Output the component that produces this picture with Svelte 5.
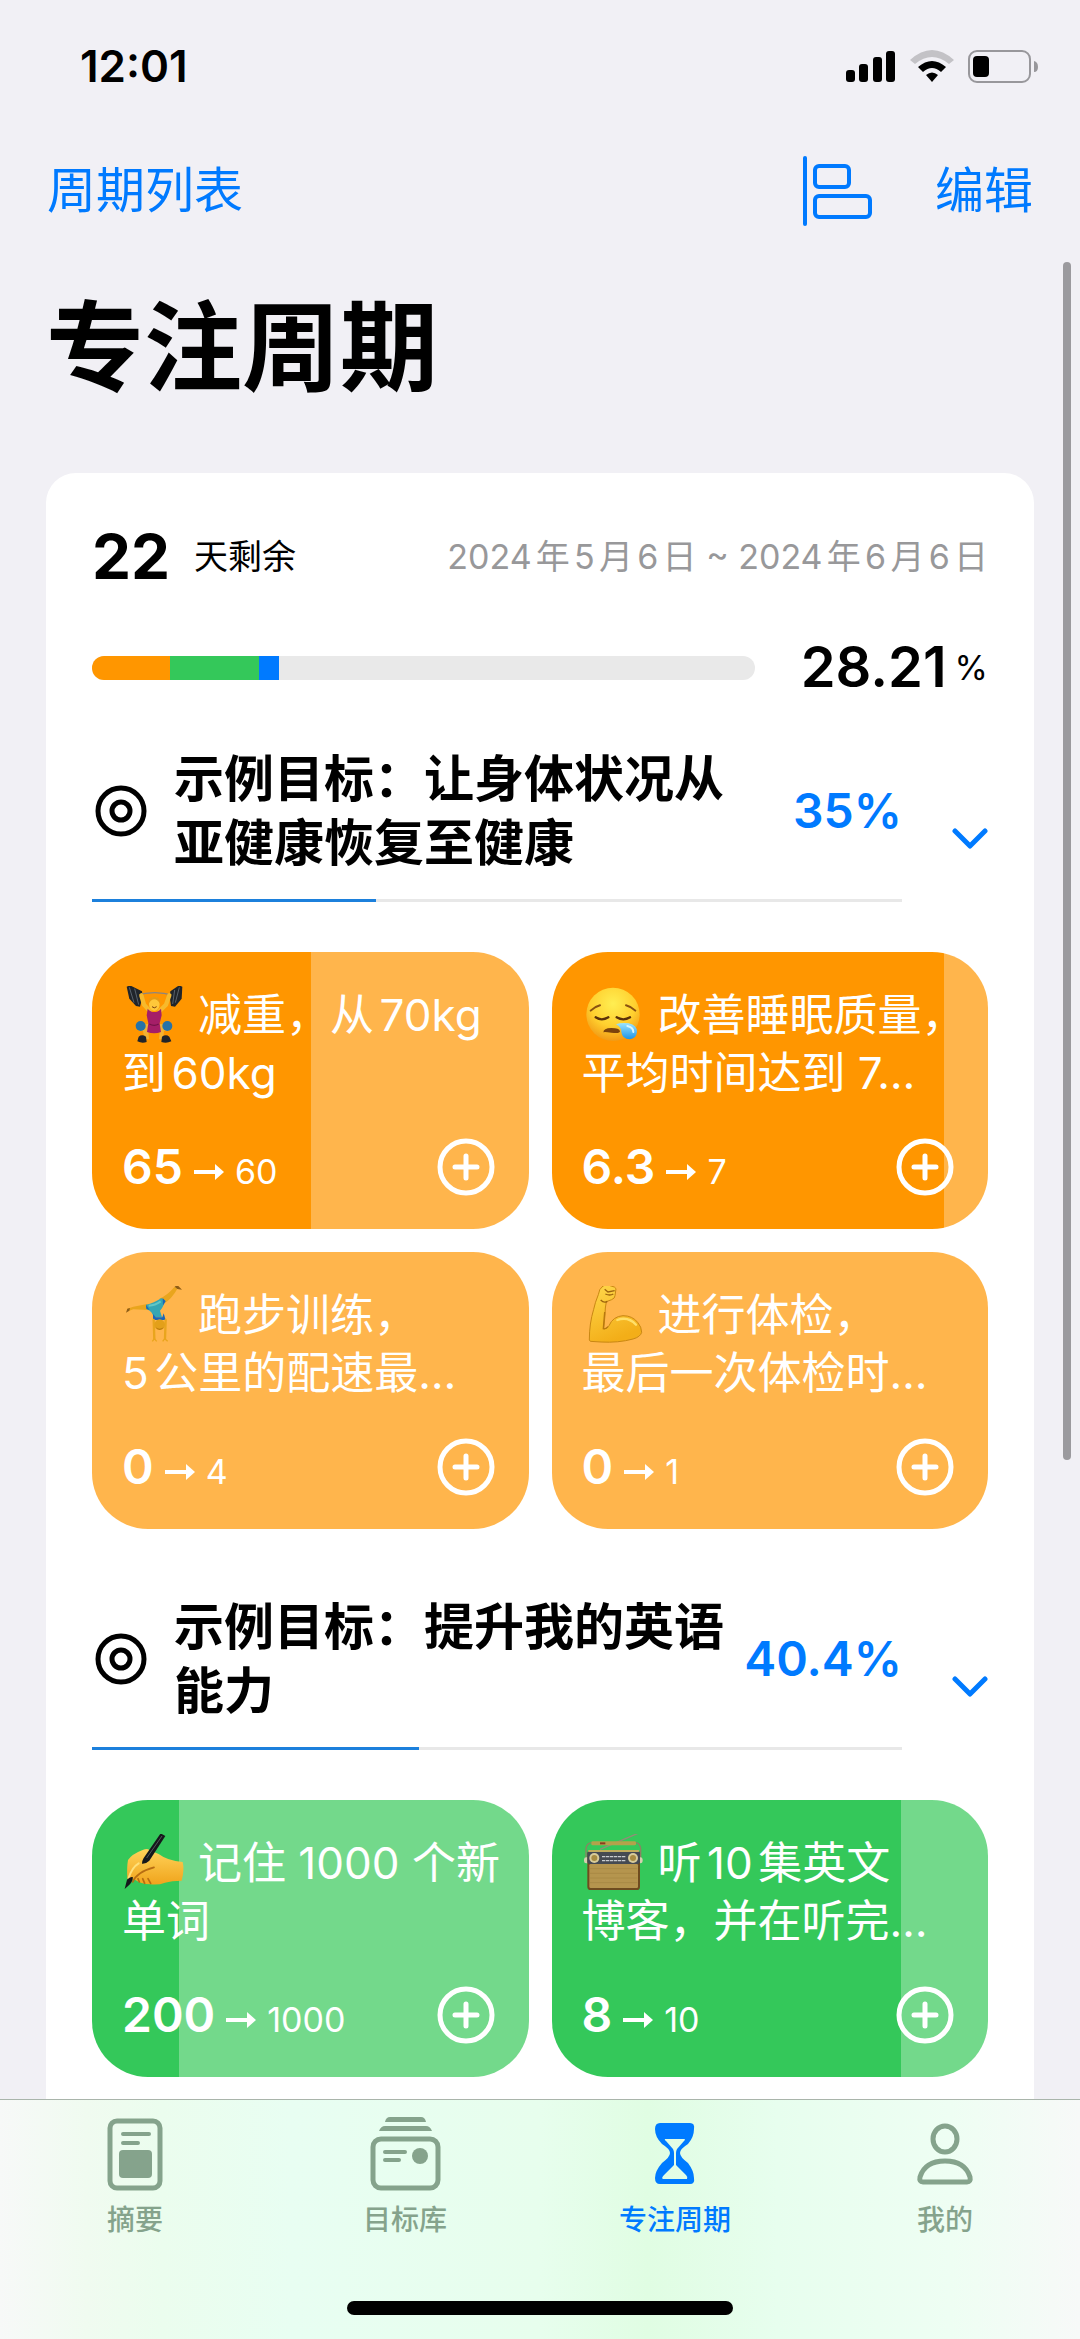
<script lang="ts">
	type Tile = { icon: string; title: string; now: string; target: string; done: number };
	type Goal = { title: string; percent: number; color: string; tint: string; tiles: Tile[] };

	const segments = [
		{ color: "#ff9600", share: 11.8 },
		{ color: "#34c85a", share: 13.4 },
		{ color: "#007aff", share: 3 },
	];

	const goals: Goal[] = [
		{
			title: "示例目标：让身体状况从亚健康恢复至健康",
			percent: 35,
			color: "#ff9600",
			tint: "#ffb54c",
			tiles: [
				{ icon: "lift", title: "减重，从70kg\n到60kg", now: "65", target: "60", done: 50 },
				{ icon: "sleepy", title: "改善睡眠质量，\n平均时间达到 7…", now: "6.3", target: "7", done: 90 },
				{ icon: "gym", title: "跑步训练，\n5公里的配速最…", now: "0", target: "4", done: 0 },
				{ icon: "arm", title: "进行体检，\n最后一次体检时…", now: "0", target: "1", done: 0 },
			],
		},
		{
			title: "示例目标：提升我的英语能力",
			percent: 40.4,
			color: "#34c85a",
			tint: "#73d98b",
			tiles: [
				{ icon: "write", title: "记住 1000 个新\n单词", now: "200", target: "1000", done: 20 },
				{ icon: "radio", title: "听10集英文\n博客，并在听完…", now: "8", target: "10", done: 80 },
			],
		},
	];

	const tabs = [
		{ id: "summary", label: "摘要" },
		{ id: "library", label: "目标库" },
		{ id: "focus", label: "专注周期" },
		{ id: "me", label: "我的" },
	];

	let active = $state("focus");
</script>

{#snippet emoji(name: string)}
	{#if name === "lift"}
		<svg class="emoji" viewBox="126 168 198 174" aria-hidden="true">
			<path d="M168 196Q224 180 280 196" fill="none" stroke="#8b8580" stroke-width="4" />
			<path d="M140 170l10-4 36 18 2 16-8 30-12-2-20-22z" fill="#20242a" />
			<path d="M307 170l-10-4-26 18-2 16 4 28 12 2 20-24z" fill="#20242a" />
			<path d="M148 172l14 46M164 176l12 48M298 172l-12 46M284 180l-6 42" stroke="#59626c" stroke-width="3" />
			<path d="M184 196l8 28 18 20M268 196l-10 28-20 20" fill="none" stroke="#f7b92c" stroke-width="13" stroke-linecap="round" stroke-linejoin="round" />
			<ellipse cx="223" cy="222" rx="16" ry="21" fill="#ffc83a" />
			<path d="M205 222q0-22 18-22t18 22q-8-14-18-14t-18 14z" fill="#e89a12" />
			<path d="M216 230q7 7 14 0" fill="none" stroke="#7a3d10" stroke-width="3" />
			<path d="M176 282h90v20h-14l-3 26h-12l3-36h-36l3 36h-14l-4-26h-13z" fill="#f2b233" />
			<path d="M203 236q8 10 20 10t20-10l2 20-6 24 4 26q-20 8-42 0l4-26-5-24z" fill="#a51e68" />
			<path d="M208 282q15 8 28 0" fill="none" stroke="#751347" stroke-width="4" />
			<circle cx="182" cy="288" r="15" fill="#2673a8" />
			<circle cx="262" cy="288" r="15" fill="#2673a8" />
			<path d="M172 334l4-14q10-8 22 0l2 16q-14 5-28-2zM244 336l2-16q12-8 22 0l6 14q-14 7-30 2z" fill="#20242a" />
		</svg>
	{:else if name === "sleepy"}
		<svg class="emoji" viewBox="126 168 198 174" aria-hidden="true">
			<defs>
				<radialGradient id="face" cx=".5" cy=".3" r=".7">
					<stop offset="0" stop-color="#ffee52" />
					<stop offset=".6" stop-color="#ffd02f" />
					<stop offset="1" stop-color="#f19a16" />
				</radialGradient>
				<linearGradient id="tear" x1="0" x2="0" y1="0" y2="1">
					<stop offset="0" stop-color="#9be4ff" />
					<stop offset="1" stop-color="#1c94e6" />
				</linearGradient>
			</defs>
			<circle cx="219" cy="253" r="80" fill="url(#face)" />
			<path d="M152 242q12-12 28-16M286 242q-12-12-28-16" fill="none" stroke="#8a5210" stroke-width="6" stroke-linecap="round" />
			<path d="M167 262q18 12 38 0M230 262q20 12 40 0" fill="none" stroke="#5b3209" stroke-width="7" stroke-linecap="round" />
			<path d="M190 308q0-14 24-14t26 10q0 8-26 4t-24 0z" fill="#7b430c" />
			<path d="M228 283q14-6 38-3 26 6 25 26-2 20-22 22-22 0-25-22 0-15-16-23z" fill="url(#tear)" />
			<path d="M262 288q18 4 18 18" fill="none" stroke="#d7f6ff" stroke-width="6" stroke-linecap="round" />
		</svg>
	{:else if name === "gym"}
		<svg class="emoji" viewBox="126 138 198 174" aria-hidden="true">
			<path d="M204 210l-44-2-16 6-2-8 18-6 42-8z" fill="#e9a51d" />
			<path d="M238 176q24-10 46-36l8 6q-16 30-42 46z" fill="#e9a51d" />
			<path d="M138 218l4-12 8-2-2 8zM284 140l8-5 14 14-14-2z" fill="#8f5d17" />
			<path d="M198 194q24-4 46-20l12 8q-8 22-16 30l6 20h-26q-2-18-20-24z" fill="#35a6b4" />
			<path d="M206 197q20-1 36-13" fill="none" stroke="#63c7c6" stroke-width="6" />
			<path d="M248 174l9 10-8 12zM198 194l1 12 10 4z" fill="#1c66b8" />
			<path d="M219 222l8 10h20l4-12 6 20h-38z" fill="#1c66b8" />
			<path d="M221 240l2 56M257 240l-2 56" stroke="#e9a51d" stroke-width="7" stroke-linecap="round" />
			<path d="M217 304l6-8 7 8M248 304l6-8 9 8" fill="none" stroke="#e9a51d" stroke-width="4" />
			<circle cx="239" cy="254" r="16" fill="#e3a01a" />
			<path d="M227 262q12 8 24 0-4 8-12 8t-12-8z" fill="#b97a10" />
		</svg>
	{:else if name === "arm"}
		<svg class="emoji" viewBox="126 138 198 174" aria-hidden="true">
			<defs>
				<linearGradient id="skin" x1="0" x2=".4" y1="0" y2="1">
					<stop offset="0" stop-color="#ffd84c" />
					<stop offset="1" stop-color="#f3ae18" />
				</linearGradient>
			</defs>
			<path d="M148 300q0-50 13-92 4-20 14-44 2-18 14-26 10-6 18-2l16 5q8 4 4 12l-2 14q0 8-10 12l-16 6q-4 18-4 40l-4 42q12-2 16-10 12-28 42-30 28 0 44 20 12 14 12 30-4 14-26 20-44 12-96 9l-32-2z" fill="url(#skin)" stroke="#c98713" stroke-width="3" />
			<path d="M194 216l-4 50q8 2 14-6" fill="none" stroke="#b8780f" stroke-width="4" />
			<path d="M194 148l10 8 20-4M196 162q14 6 24 0M182 180q10 10 20 4" fill="none" stroke="#9d640e" stroke-width="4" />
			<path d="M232 240q32-12 56 14" fill="none" stroke="#ffe06a" stroke-width="7" stroke-linecap="round" />
		</svg>
	{:else if name === "write"}
		<svg class="emoji" viewBox="126 162 198 174" aria-hidden="true">
			<defs>
				<linearGradient id="hand" x1="0" x2="0" y1="0" y2="1">
					<stop offset="0" stop-color="#ffd35a" />
					<stop offset="1" stop-color="#f0a41c" />
				</linearGradient>
			</defs>
			<path d="M142 296q-2-34 2-56 12-18 44-30 14-6 20 0 10 4 28 12 26 20 72 24 6 22-3 56-30 0-50 6-20 8-44 5-30-2-46-14z" fill="url(#hand)" />
			<path d="M158 306q12-30 64-44M178 306l-4-10M194 310l-6-14M212 310l-8-14" fill="none" stroke="#b76d12" stroke-width="5" stroke-linecap="round" />
			<path d="M176 250q-20 12-30 44" fill="none" stroke="#ffe17b" stroke-width="6" stroke-linecap="round" />
			<path d="M242 160l14 8-48 74q-10 10-22 9 0-9 5-17z" fill="#15181b" />
			<path d="M246 168l-46 66" stroke="#53585c" stroke-width="3" />
			<path d="M134 327l7-28q10-10 18-7-2 16-14 25z" fill="#15181b" />
		</svg>
	{:else}
		<svg class="emoji" viewBox="126 162 198 174" aria-hidden="true">
			<path d="M180 208L294 160" stroke="#938c78" stroke-width="4" />
			<path d="M138 246v-40q2-16 16-18M302 246v-40q-2-16-14-18" fill="none" stroke="#8a8462" stroke-width="4" />
			<rect x="154" y="184" width="134" height="12" rx="4" fill="#b3a24b" />
			<path d="M180 190h16" stroke="#8b3b20" stroke-width="6" />
			<rect x="132" y="232" width="176" height="18" rx="7" fill="#d5cfb0" />
			<rect x="142" y="212" width="158" height="118" rx="10" fill="#6e4c1f" />
			<rect x="148" y="252" width="146" height="72" rx="4" fill="#b5954e" />
			<path d="M150 266h142M150 280h142M150 294h142M150 308h142" stroke="#a98a45" stroke-width="3" />
			<rect x="142" y="212" width="158" height="40" rx="8" fill="#454a52" />
			<rect x="144" y="210" width="154" height="6" rx="3" fill="#c0ad5d" />
			<circle cx="163" cy="234" r="15" fill="#d8cc9a" />
			<circle cx="163" cy="234" r="9" fill="#a78c42" />
			<circle cx="279" cy="234" r="15" fill="#d8cc9a" />
			<circle cx="279" cy="234" r="9" fill="#a78c42" />
			<path d="M186 230h70M186 242h70" stroke="#c9ccd0" stroke-width="4" stroke-dasharray="10 2" />
		</svg>
	{/if}
{/snippet}

{#snippet tabIcon(id: string)}
	<svg width="74" height="74" viewBox="0 0 74 74" fill="none" stroke="currentColor" stroke-width="5" stroke-linecap="round" aria-hidden="true">
		{#if id === "summary"}
			<rect x="12" y="4" width="50" height="67" rx="7" />
			<path d="M25 17h26M25 26h15" stroke-width="4" />
			<rect x="21" y="33" width="33" height="28" rx="4" fill="currentColor" stroke="none" />
		{:else if id === "library"}
			<rect x="5" y="22" width="65" height="49" rx="8" />
			<path d="M17 5q1-5 5-5h31q4 0 5 5zM11 14q2-5 6-5h41q4 0 6 5z" fill="currentColor" stroke="none" />
			<path d="M17 35h20M17 43h14" stroke-width="4" />
			<circle cx="52" cy="39" r="8" fill="currentColor" stroke="none" />
		{:else if id === "focus"}
			<path
				d="M22 6H52Q57 6 56 12Q56 20 50 27Q42 32 42 36Q42 40 50 46Q56 54 56 61Q57 67 52 67H22Q17 67 17 61Q17 54 24 46Q32 40 32 36Q32 32 24 27Q17 20 17 12Q17 6 22 6Z
				M27 22Q26 23 28 24L35 32Q36 34 36 36V48L26 58Q23 61 25 62H49Q50 60 48 58L38 48V36Q38 34 39 32L46 24Q48 22 46 22Z"
				fill="currentColor"
				fill-rule="evenodd"
				stroke="none"
			/>
			<path d="M37 34v16" stroke="#e4fee8" stroke-width="2" />
		{:else}
			<ellipse cx="37" cy="22" rx="12" ry="13" />
			<path d="M15 65Q11 65 12 60Q17 44 37 44T62 60Q63 65 59 65Z" />
		{/if}
	</svg>
{/snippet}

<div class="app">
	<div class="status">
		<span>12:01</span>
		<div class="signals">
			<svg width="50" height="32" viewBox="0 0 50 32" aria-hidden="true">
				<rect x="0" y="20" width="9" height="12" rx="3" />
				<rect x="13" y="14" width="9" height="18" rx="3" />
				<rect x="27" y="7" width="9" height="25" rx="3" />
				<rect x="40" y="1" width="9" height="31" rx="3" />
			</svg>
			<svg width="44" height="32" viewBox="0 0 44 32" aria-hidden="true">
				<path d="M0 10Q22-10 44 10L39 14Q22 0 5 14Z" fill="#c3c2c6" />
				<path d="M8 17Q22 5 36 17L31 22Q22 14 13 22Z" />
				<path d="M16 25Q22 20 28 25L22 32Z" />
			</svg>
			<svg width="70" height="33" viewBox="0 0 70 33" aria-hidden="true">
				<rect x="1" y="1" width="61" height="31" rx="8" fill="none" stroke="#98979b" stroke-width="2" />
				<rect x="5" y="6" width="16" height="21" rx="4" />
				<path d="M66 11q4 1 4 6t-4 5z" fill="#98979b" />
			</svg>
		</div>
	</div>

	<nav class="top">
		<a href="#list">周期列表</a>
		<div class="actions">
			<button aria-label="时间轴">
				<svg width="70" height="70" viewBox="0 0 70 70" fill="none" stroke="currentColor" stroke-width="4" stroke-linecap="round" aria-hidden="true">
					<path d="M2 2v66" />
					<rect x="12" y="10" width="34" height="21" rx="4" />
					<rect x="12" y="40" width="55" height="21" rx="4" />
				</svg>
			</button>
			<button>编辑</button>
		</div>
	</nav>

	<main>
		<h1>专注周期</h1>

		<section class="card">
			<div class="period">
				<p class="days"><b>22</b> 天剩余</p>
				<p class="dates">2024年5月6日 ~ 2024年6月6日</p>
			</div>
			<div class="total">
				<div class="bar">
					{#each segments as s}
						<i style="width: {s.share}%; background: {s.color}"></i>
					{/each}
				</div>
				<p class="sum"><b>28.21</b><small>%</small></p>
			</div>

			{#each goals as goal}
				<section class="goal">
					<header>
						<div class="summary">
							<div class="name">
								<svg width="58" height="58" viewBox="0 0 58 58" fill="none" stroke="#000" stroke-width="5" aria-hidden="true">
									<circle cx="29" cy="29" r="23" />
									<circle cx="29" cy="29" r="9" />
								</svg>
								<h2>{goal.title}</h2>
								<span class="percent">{goal.percent}%</span>
							</div>
							<div class="line"><i style="width: {goal.percent}%"></i></div>
						</div>
						<button class="toggle" aria-label="收起">
							<svg width="36" height="24" viewBox="0 0 36 24" fill="none" stroke="currentColor" stroke-width="5" stroke-linecap="round" stroke-linejoin="round" aria-hidden="true">
								<path d="M3 5l15 15L33 5" />
							</svg>
						</button>
					</header>
					<div class="tiles">
						{#each goal.tiles as tile}
							<article style="background: linear-gradient(90deg, {goal.color} {tile.done}%, {goal.tint} {tile.done}%)">
								<h3>{@render emoji(tile.icon)}{tile.title}</h3>
								<div class="foot">
									<p>
										<b>{tile.now}</b>
										<svg width="30" height="24" viewBox="0 0 30 24" fill="#fff" aria-hidden="true">
											<path d="M0 10h21V4l9 8-9 8v-6H0z" />
										</svg>
										<span>{tile.target}</span>
									</p>
									<button aria-label="添加">
										<svg width="58" height="58" viewBox="0 0 58 58" fill="none" stroke="#fff" stroke-width="5" stroke-linecap="round" aria-hidden="true">
											<circle cx="29" cy="29" r="26" />
											<path d="M18 29h22M29 18v22" />
										</svg>
									</button>
								</div>
							</article>
						{/each}
					</div>
				</section>
			{/each}
		</section>
	</main>
	<div class="scrollbar"></div>

	<nav class="tabs">
		<div class="row">
			{#each tabs as tab}
				<button class:active={active === tab.id} onclick={() => (active = tab.id)}>
					{@render tabIcon(tab.id)}
					<span>{tab.label}</span>
				</button>
			{/each}
		</div>
		<div class="home"></div>
	</nav>
</div>

<style>
	:global(body) {
		margin: 0;
		background: #f1f0f5;
	}

	.app {
		position: relative;
		display: flex;
		flex-direction: column;
		height: 100vh;
		overflow: hidden;
		background: #f1f0f5;
		color: #000;
		font-family: Inter, "Noto Sans CJK SC", sans-serif;
		line-height: 1.2;
		text-autospace: normal;
	}

	h1, h2, h3, p {
		margin: 0;
	}

	svg {
		display: block;
		flex: none;
	}

	button {
		border: 0;
		padding: 0;
		background: none;
		color: inherit;
		font: inherit;
		cursor: pointer;
	}

	.status {
		display: flex;
		flex: none;
		align-items: center;
		justify-content: space-between;
		height: 133px;
		padding: 0 42px 0 80px;
		font-size: 44px;
		font-weight: 600;
	}

	.signals {
		display: flex;
		gap: 14px;
	}

	.top {
		display: flex;
		flex: none;
		align-items: center;
		justify-content: space-between;
		height: 116px;
		padding: 0 47px;
		color: #007aff;
		font-size: 49px;
	}

	.top a {
		color: inherit;
		text-decoration: none;
	}

	.actions {
		display: flex;
		align-items: center;
		gap: 62px;
	}

	main {
		display: flex;
		flex: 1;
		flex-direction: column;
		min-height: 0;
		overflow: hidden;
		padding: 0 46px;
	}

	h1 {
		padding: 40px 0 66px;
		font-size: 98px;
		line-height: 118px;
		font-weight: 700;
	}

	.card {
		flex: 1 0 auto;
		padding: 46px 46px 0;
		border-radius: 30px 30px 0 0;
		background: #fff;
	}

	.period, .total {
		display: flex;
		align-items: center;
		justify-content: space-between;
	}

	.period {
		height: 76px;
		font-size: 34px;
	}

	.days {
		display: flex;
		align-items: center;
		gap: 24px;
	}

	.days b {
		font-size: 62px;
	}

	.dates {
		color: #98989a;
	}

	.total {
		gap: 46px;
		height: 70px;
		margin: 38px 0 44px;
	}

	.bar {
		display: flex;
		flex: 1;
		height: 24px;
		overflow: hidden;
		border-radius: 12px;
		background: #e9e9e9;
	}

	.sum {
		display: flex;
		align-items: center;
		gap: 8px;
	}

	.sum b {
		font-size: 56px;
		font-weight: 600;
	}

	.sum small {
		font-size: 34px;
	}

	.goal + .goal {
		margin-top: 66px;
	}

	header {
		display: flex;
		align-items: center;
		gap: 50px;
		margin-bottom: 50px;
	}

	.summary {
		flex: 1;
	}

	.name {
		display: grid;
		grid-template-columns: 58px 1fr 160px;
		align-items: center;
		column-gap: 24px;
	}

	h2 {
		margin-right: -20px;
		font-size: 50px;
		line-height: 64px;
		font-weight: 600;
	}

	.percent {
		color: #007aff;
		font-size: 48px;
		font-weight: 600;
		text-align: right;
	}

	.line {
		height: 3px;
		margin-top: 24px;
		background: #e8e8e8;
	}

	.line i {
		display: block;
		height: 100%;
		background: #1c80dc;
	}

	.toggle {
		padding-top: 26px;
		color: #007aff;
	}

	.tiles {
		display: grid;
		grid-template-columns: repeat(2, minmax(0, 1fr));
		gap: 23px;
	}

	article {
		padding: 34px 34px 33px 30px;
		border-radius: 56px;
		color: #fff;
	}

	h3 {
		height: 116px;
		font-size: 44px;
		line-height: 58px;
		font-weight: 400;
		white-space: pre;
	}

	.emoji {
		display: inline-block;
		width: 66px;
		height: 58px;
		margin-right: 10px;
		vertical-align: top;
	}

	.foot {
		display: flex;
		align-items: center;
		justify-content: space-between;
		height: 58px;
		margin-top: 36px;
	}

	.foot p {
		display: flex;
		align-items: baseline;
		gap: 11px;
		font-size: 34px;
	}

	.foot b {
		font-size: 48px;
		font-weight: 600;
	}

	.scrollbar {
		position: absolute;
		top: 262px;
		right: 9px;
		width: 8px;
		height: 1198px;
		border-radius: 4px;
		background: #9b9a9e;
	}

	.tabs {
		display: flex;
		flex: none;
		flex-direction: column;
		align-items: center;
		justify-content: space-between;
		box-sizing: border-box;
		height: 240px;
		padding: 17px 0 24px;
		border-top: 1px solid #a9b5ab;
		background: linear-gradient(90deg, #f7f9f8, #f0fbf0 8%, #ebfdee 15%, #e8fef2 27%, #e7feed 50%, #e0fde3 60%, #e7feee 72%, #eefef3 88%, #f7f9f8);
	}

	.row {
		display: grid;
		grid-template-columns: repeat(4, 1fr);
		width: 100%;
	}

	.row button {
		display: flex;
		flex-direction: column;
		align-items: center;
		gap: 12px;
		color: #85a38c;
		font-size: 28px;
		line-height: 34px;
		font-weight: 500;
	}

	.row .active {
		color: #007aff;
	}

	.home {
		width: 386px;
		height: 14px;
		border-radius: 7px;
		background: #000;
	}
</style>
